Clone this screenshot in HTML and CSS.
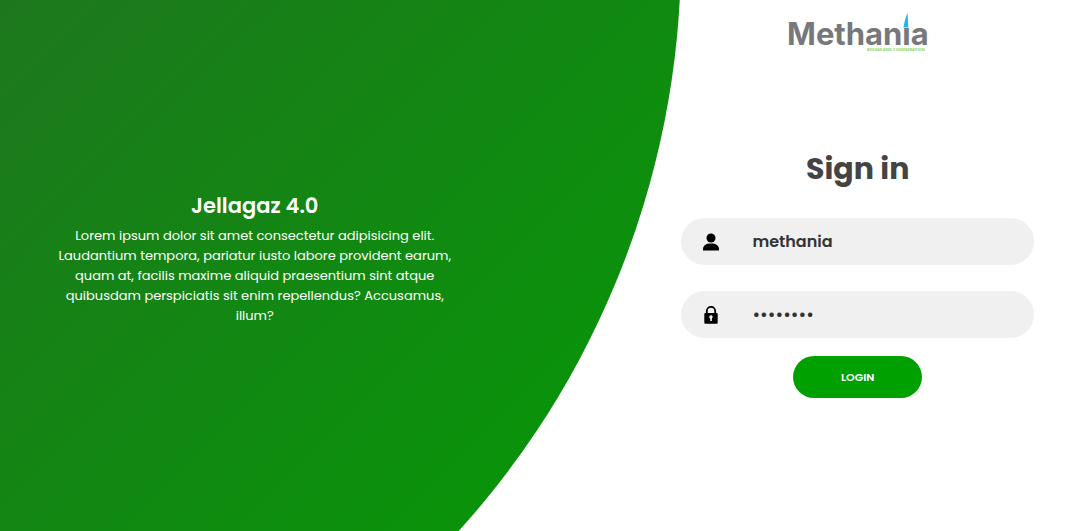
FILE: index.html
```html
<!DOCTYPE html>
<html lang="en">
<head>
<meta charset="utf-8">
<meta name="viewport" content="width=device-width, initial-scale=1">
<title>Sign in</title>
<link rel="stylesheet" href="styles.css">
</head>
<body>
<main class="page">
  <section class="intro">
    <h2 class="intro-title">Jellagaz 4.0</h2>
    <p class="intro-text">Lorem ipsum dolor sit amet consectetur adipisicing elit. Laudantium tempora, pariatur iusto labore provident earum, quam at, facilis maxime aliquid praesentium sint atque quibusdam perspiciatis sit enim repellendus? Accusamus, illum?</p>
  </section>
  <section class="signin">
    <svg class="logo" viewBox="0 0 140 42" role="img" aria-label="Methania">
      <text class="logo-name" x="-1" y="33">Methanıa</text>
      <path d="M119.5 0.5L120.3 15.5H115.5Q116.5 7.5 119.5 0.5Z" fill="#1cb8f0"/>
      <text class="logo-tag" x="79" y="39">BIOGAS AND COGENERATION</text>
    </svg>
    <form class="form">
      <h1 class="form-title">Sign in</h1>
      <label class="field">
        <svg class="icon" viewBox="0 0 18 18" aria-hidden="true">
          <circle cx="9" cy="5" r="4.5"/>
          <path d="M1 17.5V16C1 12.5 4 10.5 9 10.5S17 12.5 17 16V17.5Z"/>
        </svg>
        <input class="input" type="text" value="methania" aria-label="Username">
      </label>
      <label class="field">
        <svg class="icon" viewBox="0 0 18 18" aria-hidden="true">
          <path d="M4.8 8V5A4.2 4.2 0 0 1 13.2 5V8" fill="none" stroke="#000" stroke-width="1.8"/>
          <rect x="2.3" y="7" width="13.4" height="10.8" rx="1"/>
          <path class="keyhole" d="M9 9.2A1.8 1.8 0 0 0 7.7 12.2L8.2 12.5V15H9.9V12.5A1.8 1.8 0 0 0 9 9.2Z"/>
        </svg>
        <input class="input" type="password" value="methania" aria-label="Password">
      </label>
      <button class="login" type="button">LOGIN</button>
    </form>
  </section>
</main>
</body>
</html>
```
FILE: styles.css
```css
* {
  box-sizing: border-box;
  margin: 0;
  padding: 0;
}

body,
input,
button {
  font-family: Poppins, Inter, "Open Sans", sans-serif;
}

.page {
  position: relative;
  display: grid;
  grid-template-columns: minmax(0, 102fr) minmax(0, 25fr) minmax(0, 89fr);
  min-height: 100vh;
  overflow: hidden;
  background: #fff;
}

/* Large disc behind the intro text */
.page::before {
  content: "";
  position: absolute;
  top: -906px;
  right: 36.9%;
  width: 1720px;
  height: 1720px;
  border-radius: 50%;
  background: linear-gradient(-45deg, #00a000 0%, #444 100%);
}

.intro {
  position: relative;
  grid-column: 1;
  align-self: center;
  padding: 0 52px 16px;
  color: #fff;
  text-align: center;
}

.intro-title {
  font-size: 21px;
  font-weight: 600;
  line-height: 32px;
  margin-bottom: 4px;
}

.intro-text {
  font-size: 13px;
  line-height: 20px;
}

.signin {
  position: relative;
  grid-column: 3;
  display: flex;
  flex-direction: column;
  align-items: center;
  padding: 12px 45px 32px 47px;
}

.logo {
  width: 140px;
  height: 42px;
}

.logo-name {
  font: 700 31px Inter, sans-serif;
  fill: #77787b;
}

.logo-tag {
  font: 700 4px "Open Sans", sans-serif;
  fill: #8ed45a;
}

.form {
  display: flex;
  flex-direction: column;
  align-items: center;
  width: 100%;
  padding-top: 91px;
}

.form-title {
  color: #444;
  font-size: 30px;
  font-weight: 700;
  line-height: 48px;
  margin-bottom: 25px;
}

.field {
  display: flex;
  align-items: center;
  gap: 32px;
  width: 100%;
  height: 47px;
  margin-bottom: 26px;
  padding: 0 21px;
  border-radius: 24px;
  background: #f0f0f0;
}

.icon {
  flex: none;
  width: 18px;
  height: 18px;
}

.keyhole {
  fill: #f0f0f0;
}

.input {
  flex: 1;
  min-width: 0;
  border: 0;
  outline: 0;
  background: none;
  color: #333;
  font-size: 16px;
  font-weight: 600;
  line-height: 24px;
}

.login {
  width: 129px;
  height: 42px;
  margin-top: -8px;
  border: 0;
  border-radius: 24px;
  background: #00a000;
  color: #fff;
  font-size: 11px;
  font-weight: 600;
  cursor: pointer;
}
```
